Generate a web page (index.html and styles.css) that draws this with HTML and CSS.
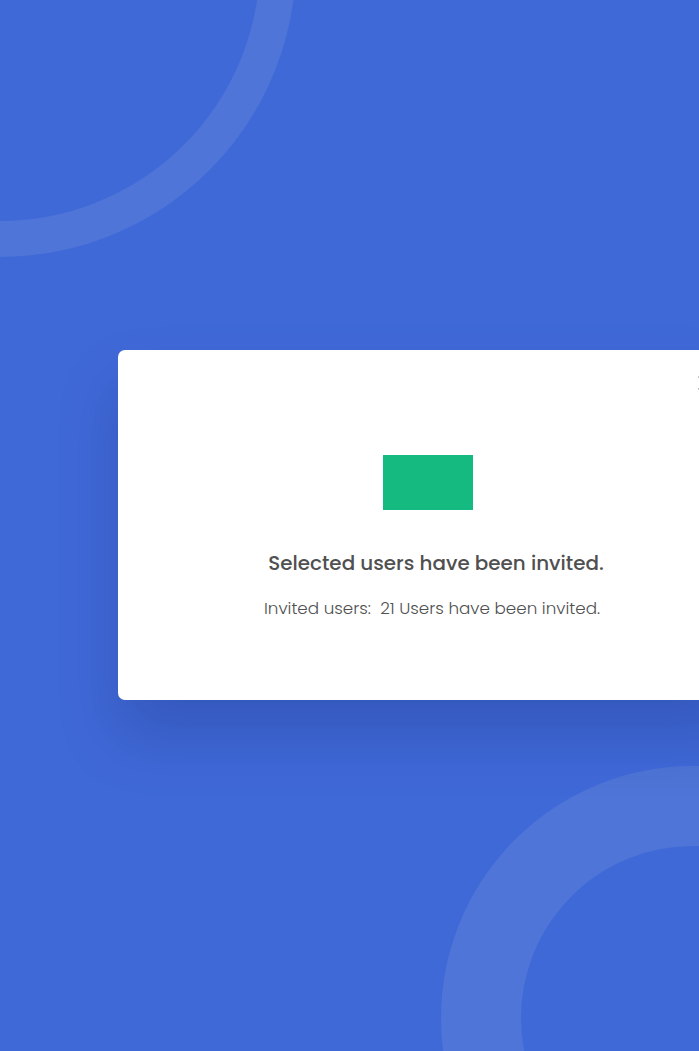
FILE: index.html
```html
<!DOCTYPE html>
<html lang="en">
<head>
<meta charset="utf-8">
<title>Users invited</title>
<link rel="stylesheet" href="styles.css">
</head>
<body>
<div class="page">
  <div class="ring ring-top"></div>
  <div class="ring ring-bottom"></div>
  <div class="modal">
    <button class="close" aria-label="Close">
      <svg width="14" height="14" viewBox="0 0 14 14"><path d="M1 1 L13 13 M13 1 L1 13" stroke="#8a8a8a" stroke-width="1.6" stroke-linecap="round" fill="none"/></svg>
    </button>
    <div class="modal-body">
      <div class="illustration"></div>
      <h2 class="title">Selected users have been invited.</h2>
      <p class="subtitle">Invited users:&nbsp; 21 Users have been invited.</p>
    </div>
  </div>
</div>
</body>
</html>
```
FILE: styles.css
```css
html, body {
  margin: 0;
  padding: 0;
}
body {
  background: #4069d8;
  font-family: "Poppins", "Open Sans", "Liberation Sans", sans-serif;
}
.page {
  position: relative;
  width: 699px;
  height: 1051px;
  overflow: hidden;
  padding-top: 350px;
  box-sizing: border-box;
}
.ring {
  position: absolute;
  border-radius: 50%;
  box-sizing: border-box;
  border-style: solid;
  border-color: #4e75d7;
}
.ring-top {
  width: 592px;
  height: 592px;
  left: -296px;
  top: -335px;
  border-width: 36px;
}
.ring-bottom {
  width: 504px;
  height: 504px;
  left: 441px;
  top: 766px;
  border-width: 80px;
}
.modal {
  position: relative;
  margin-left: 118px;
  width: 620px;
  height: 350px;
  background: #ffffff;
  border-radius: 7px;
  box-shadow: 0 36px 60px rgba(15, 30, 90, 0.22);
}
.close {
  position: absolute;
  top: 26px;
  right: 26px;
  width: 14px;
  height: 14px;
  padding: 0;
  border: 0;
  background: none;
  display: flex;
}
.modal-body {
  display: flex;
  flex-direction: column;
  align-items: center;
  padding-top: 105px;
}
.illustration {
  width: 90px;
  height: 55px;
  background: #15ba81;
}
.title {
  margin: 40px 0 0 16px;
  font-size: 19.9px;
  line-height: 26px;
  font-weight: 500;
  color: #505050;
}
.subtitle {
  margin: 21px 0 0 8px;
  font-size: 16.75px;
  line-height: 22px;
  font-weight: 300;
  color: #505050;
}
```
